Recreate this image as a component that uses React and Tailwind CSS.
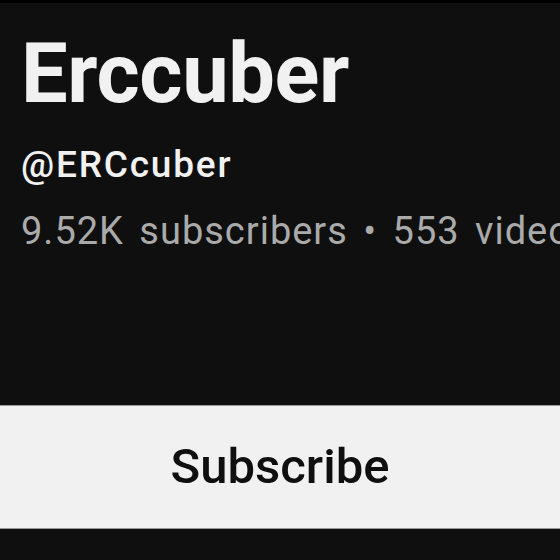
export default function App() {
  return (
    <div className="w-[560px] h-[560px] overflow-hidden bg-[#0f0f0f] flex flex-col border-t-[3px] border-black" style={{ fontFamily: 'Roboto, "Noto Sans", sans-serif' }}>
      <div className="pl-[21px] pt-[23px]">
        <h1 className="text-[83px] leading-[96px] font-bold text-[#f1f1f1] tracking-[-0.4px]">Erccuber</h1>
        <p className="mt-[22px] text-[37px] leading-[42px] font-medium text-[#f1f1f1] tracking-[1.8px]">@ERCcuber</p>
        <p className="mt-[24px] text-[38px] leading-[42px] text-[#aaaaaa] whitespace-nowrap tracking-[1px] [word-spacing:5px]">9.52K subscribers • 553 videos</p>
      </div>
      <div className="mt-auto mb-[31px] -mx-[20px] h-[124px] bg-[#f1f1f1] border-y border-[#9a9a9a] flex items-center justify-center">
        <span className="text-[49px] font-medium text-[#0f0f0f]">Subscribe</span>
      </div>
    </div>
  );
}
